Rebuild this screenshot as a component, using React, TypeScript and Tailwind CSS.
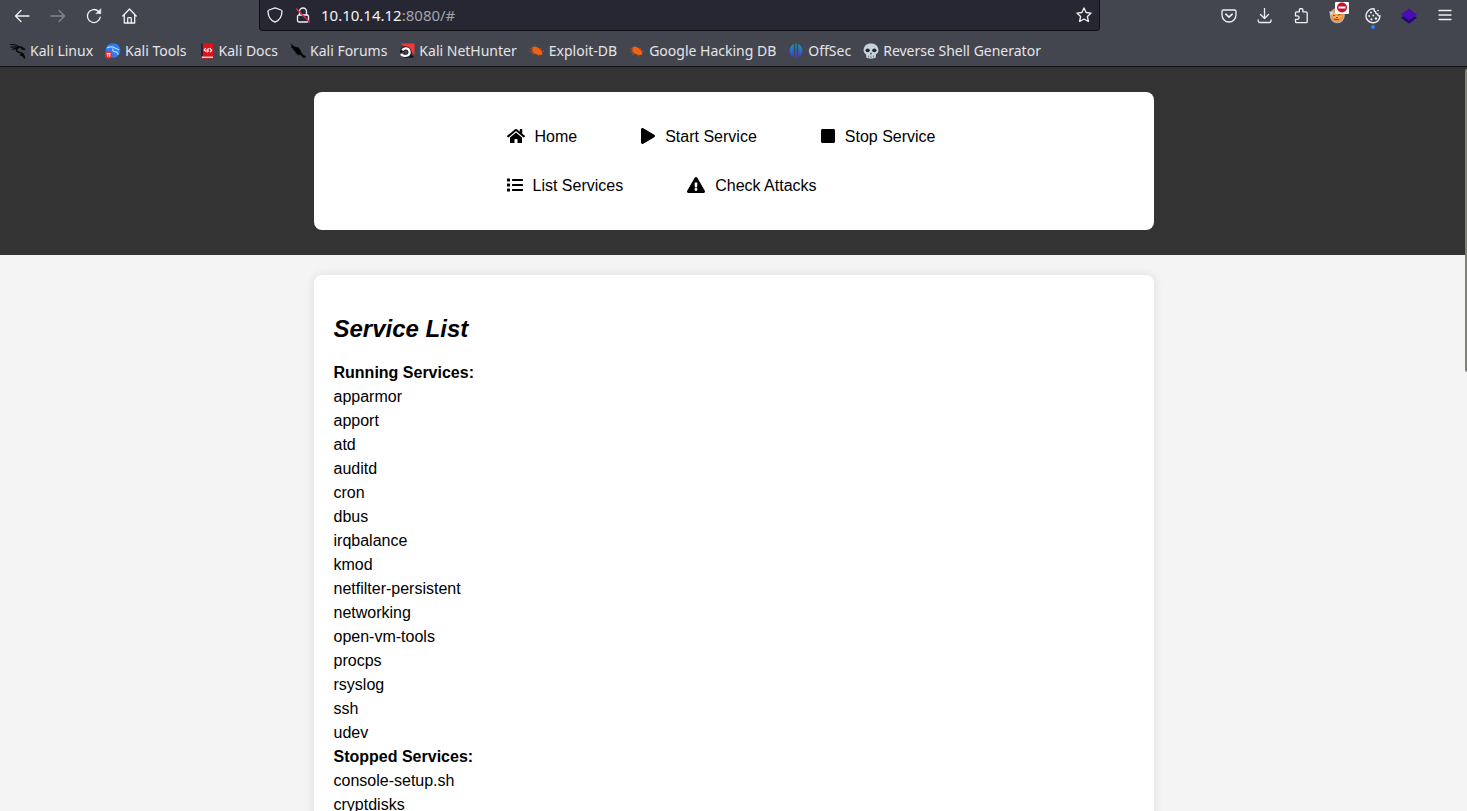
import React from "react";
import { FaHome, FaPlay, FaStop, FaList, FaExclamationTriangle } from "react-icons/fa";

type IconProps = { className?: string };

const stroke = {
  fill: "none",
  stroke: "currentColor",
  strokeWidth: 1.3,
  strokeLinecap: "round",
  strokeLinejoin: "round",
} as const;

const ArrowLeft = () => (
  <svg viewBox="0 0 16 16" className="size-4" {...stroke}>
    <path d="M15 8H1.5M7 2.5 1.5 8 7 13.5" />
  </svg>
);
const ArrowRight = () => (
  <svg viewBox="0 0 16 16" className="size-4" {...stroke}>
    <path d="M1 8h13.500M9 2.500 14.500 8 9 13.500" />
  </svg>
);
const Reload = () => (
  <svg viewBox="0 0 16 16" className="size-4" {...stroke}>
    <path d="M14.300 9.200A6.500 6.500 0 1 1 12.600 3.500L14 4.900" />
    <path d="M14.800 1v4.600h-4.600z" fill="currentColor" strokeWidth={0.6} />
  </svg>
);
const Home = () => (
  <svg viewBox="0 0 16 16" className="size-4" {...stroke}>
    <path d="M.8 8 7.500 1l6.700 7M2.300 6.600V15h10.400V6.600" />
    <path d="M5.700 15v-4.500a.8.800 0 0 1 .8-.8h2a.8.800 0 0 1 .8.800V15" />
  </svg>
);
const Shield = () => (
  <svg viewBox="0 0 16 16" className="size-4" {...stroke}>
    <path d="M8 .9 14 3q1 .3 1 1.300C14.900 10 12 13.600 8 15.200 4 13.600 1.100 10 1 4.300q0-1 1-1.300z" />
  </svg>
);
const InsecureLock = () => (
  <svg viewBox="0 0 16 16" className="size-4" {...stroke}>
    <rect x="2.500" y="8" width="11" height="7" rx="1.500" />
    <path d="M4.500 7.500V4.500a3.500 3.500 0 0 1 7 0v3" />
    <path d="M1.500 2 14.500 15" stroke="#e22850" strokeWidth={1.4} />
  </svg>
);
const Star = () => (
  <svg viewBox="0 0 16 16" className="size-4" {...stroke}>
    <path d="m8 .9 2.100 4.600 5 .6-3.700 3.400 1 5L8 12l-4.400 2.500 1-5L.9 6.100l5-.6z" />
  </svg>
);
const Pocket = () => (
  <svg viewBox="0 0 16 16" className="size-4" {...stroke}>
    <path d="M2.500 2h11A1.500 1.500 0 0 1 15 3.500V7A7 7 0 0 1 1 7V3.500A1.500 1.500 0 0 1 2.500 2z" />
    <path d="M4.800 6.200 8 9.200l3.200-3" strokeWidth={1.6} />
  </svg>
);
const Download = () => (
  <svg viewBox="0 0 16 16" className="size-4" {...stroke}>
    <path d="M7.500 0v10.500M3.500 6.500 7.500 10.500l4-4M1.200 12v1A1.500 1.500 0 0 0 2.700 14.500h9.800A1.500 1.500 0 0 0 14 13v-1" />
  </svg>
);
const Puzzle = () => (
  <svg viewBox="0 0 16 16" className="size-4" {...stroke}>
    <path d="M2.500 5A1.200 1.200 0 0 1 3.700 3.800H6.300V2.300a1.800 1.800 0 0 1 3.600 0v1.500h3.100A1.200 1.200 0 0 1 14.200 5v8.700a1 1 0 0 1-1 1H3.500a1 1 0 0 1-1-1v-2.400h1.900a1.700 1.700 0 0 0 0-3.400H2.500z" />
  </svg>
);
const Fox = () => (
  <svg viewBox="0 0 16 16" className="size-4">
    <circle cx="8.300" cy="7.600" r="6.900" fill="#f2943c" stroke="#b3b1ae" strokeWidth="1.300" />
    <path d="M1.500 5 5 5l2 1.500 5-2L14 5l-4 3 3.500 1-5 1.200-4-.5z" fill="#ffb566" />
    <path d="m4 7 2.200 1M8.500 7.300l3-1.300M5 11.300l5 .4M7 9.500h2" stroke="#8d4a1b" strokeWidth="1.100" />
    <path d="M0 3.500 5 3.700 1.800 7.500z" fill="#d8d9db" />
  </svg>
);
const NoEntry = () => (
  <svg viewBox="0 0 14 12" className="h-3 w-3.5">
    <rect width="14" height="12" rx="1" fill="#fff" />
    <circle cx="7" cy="5.500" r="5" fill="#c4122f" />
    <path d="M3.500 5.500h7" stroke="#fff" strokeWidth="2" />
  </svg>
);
const Cookie = () => (
  <svg viewBox="0 0 16 16" className="size-4" {...stroke} strokeWidth={1.4}>
    <path d="M9.200.9A7 7 0 1 0 15 7.800c-1.600.3-2.400-.6-2.200-1.900-1.500.1-2.300-.7-2.100-2C9.500 3.600 8.900 2.400 9.200.9z" />
    <g fill="currentColor" stroke="none">
      <circle cx="6" cy="4.500" r="1" />
      <circle cx="4.200" cy="8" r="1" />
      <circle cx="8.300" cy="7.600" r="1" />
      <circle cx="6.500" cy="11.300" r="1.100" />
      <circle cx="11" cy="10.500" r="1.200" />
      <circle cx="13" cy="2.500" r=".8" />
    </g>
  </svg>
);
const Layers = () => (
  <svg viewBox="0 0 16 16" className="size-4">
    <path d="M0 9.800 8 4.500l8 5.300L8 15.700z" fill="#1f0675" />
    <path d="M0 6.500 8 .6l8 5.900-8 5.900z" fill="#4b0cb0" />
  </svg>
);
const Menu = () => (
  <svg viewBox="0 0 16 16" className="size-4" {...stroke}>
    <path d="M2 2.500h12M2 7h12M2 11.500h12" />
  </svg>
);

const Dragon = () => (
  <svg viewBox="0 0 16 16" className="size-4" fill="none" stroke="#070709" strokeLinecap="round" strokeLinejoin="round">
    <path d="M.5 1.700c3-.7 6 .2 8.500 2M1 4.300c2.500-.8 5-.5 7.500.7M2.300 6.300C4 5.600 5.600 5.500 7 5.800" strokeWidth="1.100" />
    <path d="M8.300 4.200c2.300-.6 4 .1 6.200 2l-2.700-.4M7.700 4.700C5.500 6.600 6.400 8.800 9 9.200c3.200.5 5.200 1.800 5.500 5.800-1-2.100-2.200-3-4.200-3.200" strokeWidth="1.500" />
  </svg>
);
const Tools = () => (
  <svg viewBox="0 0 16 16" className="size-4">
    <circle cx="8" cy="7.500" r="7.300" fill="#2b7df5" />
    <path d="M2 5c3-1.700 6-1.200 8.500.2L14 7M8 5.500c-1 2 .5 3 2.200 3.200 1.600.3 2.700 1.200 2.900 3" fill="none" stroke="#b8dbff" strokeWidth="1.200" />
    <circle cx="3.700" cy="11.800" r="3.700" fill="#ee2c33" />
    <path d="M1.700 10.500h4M2.800 10.500v3.200M4.700 10.500v3.200" stroke="#fff" strokeWidth="1" />
  </svg>
);
const Docs = () => (
  <svg viewBox="0 0 16 16" className="size-4">
    <path d="M2 .5h12v15H2z" fill="#e01218" />
    <path d="M2 .5h1.800v12.800H2z" fill="#231f3c" />
    <path d="M3 13.600h11v1.400H3z" fill="#f3dede" />
    <path d="m6.700 5-1.500 2 2.200 1.700M10.700 5.200l2 2-1.700 2M9.800 5.500 8 7l1.300 1.100L8 9.300" fill="none" stroke="#fff" strokeWidth="1.200" />
  </svg>
);
const Forums = () => (
  <svg viewBox="0 0 16 16" className="size-4">
    <path d="M.3.300 3 2.600l3 1.700 2-.2 2.300 2.600 1 2.600 1.700 2.500 2.800 1.500v1.500l-3-.2-2.500-2.900-1.500-.3-.5 1-1.300-1.500L5.500 10 5.300 8.300 3 7l.6-1L1 4.500l.7-1z" fill="#040405" />
  </svg>
);
const NetHunter = () => (
  <svg viewBox="0 0 16 16" className="size-4">
    <path d="M1.500.500H15.500V11.500L12 9z" fill="#f2383c" />
    <path d="m3 11 9 .5 3 2-1.500 1.500-8-1z" fill="#17171c" />
    <path d="M3.300 9.500C2.500 6.500 5.500 4.500 8 5.500c3 1.200 3.700 5 1.600 6.600-1.700 1.300-4.300.8-5.600-.3" fill="none" stroke="#17171c" strokeWidth="4" />
    <path d="M3.300 7.300c1.500-2.300 4.600-2.600 6.200-.9 1.800 1.900 1.400 4.700-.5 5.800-2.200 1.200-5.500.8-7-1.200" fill="none" stroke="#fff" strokeWidth="2.300" />
  </svg>
);
const Bug = () => (
  <svg viewBox="0 0 16 16" className="size-4">
    <path d="M3.500 4.300C5.500 3.300 8.500 4 10.500 5.800c1.600 1.300 2.800 3.200 2.800 4.600-.3 1.500-1.800 1.800-3.300 1.600-2.800-.3-5.500-1.900-6.700-4z" fill="#f3600f" />
    <path d="M1 5.300 4 7M1 8.700l3.500.3M3 11l4-.5M7 4 6 2.500M10.500 6.500l2-1.500M12 8.500l3-.7M9 11.500l1 2" fill="none" stroke="#c9581f" strokeWidth=".7" />
  </svg>
);
const OffSec = () => (
  <svg viewBox="0 0 16 16" className="size-4">
    <defs>
      <linearGradient id="offsec" gradientUnits="userSpaceOnUse" x1="0" y1="0" x2="0" y2="16">
        <stop offset="0" stopColor="#10a3ad" />
        <stop offset=".5" stopColor="#2b68c4" />
        <stop offset="1" stopColor="#5b28d6" />
      </linearGradient>
    </defs>
    <path d="M5.700.900v13.200A7.300 7.300 0 0 1 5.700.900zM7.300.500h1.400v15H7.300zM10.300.900v13.200A7.300 7.300 0 0 0 10.300.900z" fill="url(#offsec)" />
  </svg>
);
const Skull = () => (
  <svg viewBox="0 0 16 16" className="size-4">
    <path d="M8 .4c4.400 0 7.400 2.700 7.400 6.600 0 2-.7 3.500-2.400 4.300l-.3 3.200c-2 1.500-7.400 1.500-9.400 0L3 11.300C1.300 10.500.6 9 .6 7 .6 3.100 3.600.4 8 .4z" fill="#c6d3df" />
    <ellipse cx="4.700" cy="7.300" rx="2.100" ry="1.900" fill="#26272e" />
    <ellipse cx="11.300" cy="7.300" rx="2.100" ry="1.900" fill="#26272e" />
    <path d="m8 9.300 1 2H7z" fill="#26272e" />
    <path d="M5.500 12.500v2M8 12.700v2.300M10.500 12.500v2" stroke="#5d6570" strokeWidth=".7" />
  </svg>
);

const bookmarks: { label: string; Icon: React.FC<IconProps> }[] = [
  { label: "Kali Linux", Icon: Dragon },
  { label: "Kali Tools", Icon: Tools },
  { label: "Kali Docs", Icon: Docs },
  { label: "Kali Forums", Icon: Forums },
  { label: "Kali NetHunter", Icon: NetHunter },
  { label: "Exploit-DB", Icon: Bug },
  { label: "Google Hacking DB", Icon: Bug },
  { label: "OffSec", Icon: OffSec },
  { label: "Reverse Shell Generator", Icon: Skull },
];

const navItems = [
  { label: "Home", icon: <FaHome className="mb-0.5 h-4 w-[18px]" /> },
  { label: "Start Service", icon: <FaPlay className="mb-0.5 h-4 w-3.5" /> },
  { label: "Stop Service", icon: <FaStop className="mb-0.5 h-4 w-3.5" /> },
  { label: "List Services", icon: <FaList className="mb-0.5 h-4 w-4" /> },
  { label: "Check Attacks", icon: <FaExclamationTriangle className="mb-0.5 h-4 w-[18px]" /> },
];

const running = [
  "apparmor", "apport", "atd", "auditd", "cron", "dbus", "irqbalance", "kmod",
  "netfilter-persistent", "networking", "open-vm-tools", "procps", "rsyslog", "ssh", "udev",
];
const stopped = ["console-setup.sh", "cryptdisks"];

function Toolbar() {
  return (
    <div className="flex h-[31px] items-center">
      <div className="flex items-center gap-5 pl-3.5">
        <button aria-label="Back"><ArrowLeft /></button>
        <button aria-label="Forward" className="text-[#85868c]"><ArrowRight /></button>
        <button aria-label="Reload"><Reload /></button>
        <button aria-label="Home page"><Home /></button>
      </div>
      <div className="mx-[121px] flex h-full min-w-0 flex-1 items-center gap-3 rounded-b border border-t-0 border-[#0f1015] bg-[#262733] px-[7px]">
        <Shield />
        <InsecureLock />
        <label className="relative -ml-0.5 flex-1 text-[15px] leading-5">
          <span aria-hidden="true" className="text-[#f3f3f5]">
            10.10.14.12<span className="text-[#a3a4aa]">:8080/#</span>
          </span>
          <input
            aria-label="Address"
            type="text"
            className="absolute inset-0 w-full bg-transparent outline-none"
          />
        </label>
        <button aria-label="Bookmark this page"><Star /></button>
      </div>
      <div className="flex items-center justify-end gap-5 pr-3.5">
        <button aria-label="Save to Pocket"><Pocket /></button>
        <button aria-label="Downloads"><Download /></button>
        <button aria-label="Extensions"><Puzzle /></button>
        <button aria-label="Proxy" className="relative">
          <Fox />
          <span className="absolute -top-1.5 left-1.5"><NoEntry /></span>
        </button>
        <button aria-label="Cookies" className="relative">
          <Cookie />
          <span className="absolute top-[17px] left-1.5 size-1 rounded-full bg-[#2b7fff]" />
        </button>
        <button aria-label="Wappalyzer"><Layers /></button>
        <button aria-label="Menu"><Menu /></button>
      </div>
    </div>
  );
}

export default function App() {
  return (
    <div className="flex h-screen flex-col overflow-hidden bg-[#f4f4f4]">
      <header className="h-[67px] shrink-0 border-b border-[#0f1013] bg-[#44464f] font-['Noto_Sans',sans-serif] text-[#f0f0f2]">
        <Toolbar />
        <nav aria-label="Bookmarks" className="mt-2.5 flex items-center gap-3 pl-2.5">
          {bookmarks.map(({ label, Icon }) => (
            <a key={label} href="#" className="flex items-center gap-1 text-sm leading-5 whitespace-nowrap text-[#e4e4e8]">
              <Icon />
              {label}
            </a>
          ))}
        </nav>
      </header>

      <div className="relative min-h-0 flex-1">
        <div className="h-full overflow-y-auto font-['Liberation_Sans',Arial,sans-serif] text-base text-black [scrollbar-width:none]">
          <div className="bg-[#333] py-[25px]">
            <nav className="mx-auto max-w-[840px] rounded-lg bg-white py-8">
              <ul className="mx-auto flex max-w-[454px] flex-wrap gap-x-16 gap-y-6">
                {navItems.map(({ label, icon }) => (
                  <li key={label}>
                    <a href="#" className="flex items-center gap-2.5 leading-[25px]">
                      {icon}
                      {label}
                    </a>
                  </li>
                ))}
              </ul>
            </nav>
          </div>

          <main className="mx-auto mt-5 max-w-[840px] rounded-lg bg-white px-5 pt-9 pb-5 shadow-[0_0_10px_rgba(0,0,0,0.1)]">
            <h2 className="mb-3.5 text-2xl leading-9 font-bold italic">Service List</h2>
            <h3 className="leading-6 font-bold">Running Services:</h3>
            <ul className="leading-6">
              {running.map((s) => <li key={s}>{s}</li>)}
            </ul>
            <h3 className="leading-6 font-bold">Stopped Services:</h3>
            <ul className="leading-6">
              {stopped.map((s) => <li key={s}>{s}</li>)}
            </ul>
          </main>
        </div>
        <div className="absolute top-0.5 right-0 h-[303px] w-0.5 rounded-l bg-[#80807c]" />
      </div>
    </div>
  );
}
